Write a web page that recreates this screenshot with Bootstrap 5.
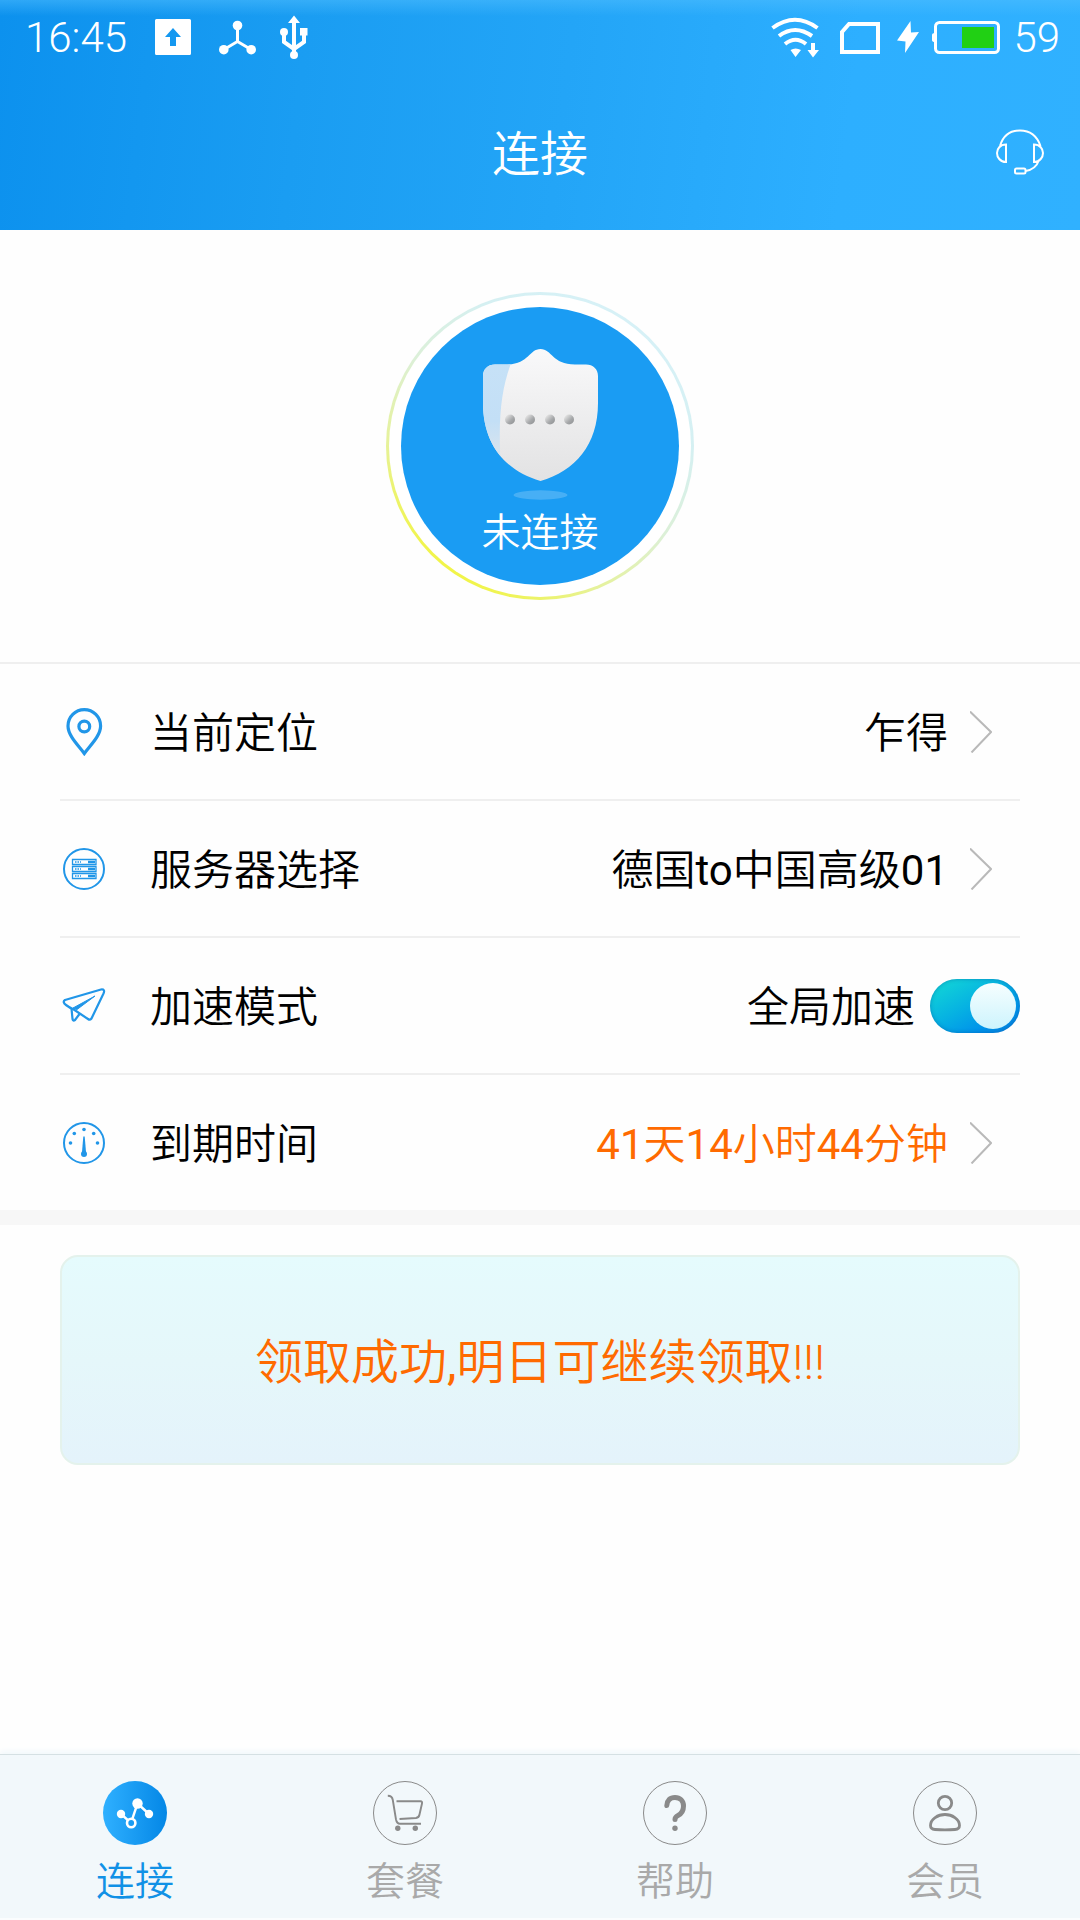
<!DOCTYPE html>
<html lang="zh-CN">
<head>
<meta charset="utf-8">
<meta name="viewport" content="width=device-width, initial-scale=1">
<title>连接</title>
<link href="https://cdn.jsdelivr.net/npm/bootstrap@5.3.0/dist/css/bootstrap.min.css" rel="stylesheet">
<style>
  body { font-family: Roboto, "Noto Sans CJK SC", sans-serif; font-weight: 350; color: #000; background: #fefefe; }
  svg { display: block; flex: none; }
  .app-header {
    color: #fff;
    background: linear-gradient(180deg, rgba(80,190,255,.5), rgba(80,190,255,0) 16px),
                linear-gradient(97deg, #0c91ee 0%, #1a9df2 28%, #23a5f7 52%, #2dafff 78%, #30b1ff 100%);
  }
  .status-bar { height: 74px; font-size: 42px; line-height: 74px; padding: 0 20px 0 25px; }
  .status-bar span { padding-top: 2px; }
  .status-left { gap: 24px; }
  .status-right { gap: 13px; }
  .title-bar { height: 156px; padding: 0 36px; display: grid; grid-template-columns: 1fr auto 1fr; }
  .title-bar h1 { font-size: 48px; line-height: 72px; font-weight: 350; padding-top: 5px; }
  .connect-area { padding: 62px 0; border-bottom: 2px solid #efefef; }
  .connect-ring {
    width: 308px; height: 308px; padding: 12px; border: 3px solid transparent; font-weight: 350;
    background: linear-gradient(#fff, #fff) padding-box,
                linear-gradient(35deg, #f3f53c 12%, #e6f29a 30%, #dcf0d8 50%, #d5f0f2 70%, #d8f2fb 100%) border-box;
  }
  .connect-disc { width: 100%; height: 100%; padding-top: 42px; background: #1a9cf3; color: #fff; font-size: 39px; line-height: 60px; }
  .connect-disc span { padding-top: 3px; }
  .setting-list { padding: 0 60px; border-bottom: 15px solid #f7f7f7; }
  .setting-row { height: 137px; border-bottom: 2px solid #efefef; font-size: 42px; line-height: 60px; color: #000; text-decoration: none; }
  .setting-row:last-child { height: 135px; border-bottom: 0; }
  .setting-row > span, .setting-row > label { padding-top: 5px; }
  .setting-icon { margin: 0 44px 0 2px; color: #2196e8; }
  .setting-arrow { margin: 0 28px 0 22px; color: #b9b9b9; }
  .orange-text { color: #ff6a00; }
  .accel-switch.form-check-input {
    width: 90px; height: 54px; margin: 0 0 0 15px; padding: 4px; border: 0; border-radius: 27px; flex: none;
    display: flex; justify-content: flex-start; align-items: center;
    background: #ccc; box-shadow: inset 0 0 4px rgba(0,70,150,.45);
  }
  .accel-switch.form-check-input:checked { justify-content: flex-end; background: linear-gradient(150deg, #10d0d8 12%, #06b2e2 45%, #0093ea 75%, #0a7fdc 100%); }
  .accel-switch::before { content: ""; width: 46px; height: 46px; border-radius: 50%; background: linear-gradient(#f6feff, #cdf4fd); }
  .claim-btn {
    width: 100%; height: 210px; padding: 5px 0 0; border: 2px solid #e4f2ec; border-radius: 18px; font-size: 48px; font-weight: 350;
    background: linear-gradient(#e5fbfd, #e5f7fa 50%, #e4f3fb);
  }
  .claim-area { padding: 30px 60px; }
  .tab-bar { border-top: 1px solid #d5e0e3; border-bottom: 2px solid #fbfdfe; background: #f2f8fb; box-shadow: 0 -3px 5px #f2f8fb; padding: 25px 0 8px; }
  .tab-link { gap: 8px; font-size: 39px; line-height: 56px; color: #a9a9a9; text-decoration: none; }
  .tab-link.current { color: #1191e6; }
  .tab-link svg { color: #8a8a8a; }
</style>
</head>
<body class="d-flex flex-column min-vh-100">

<header class="app-header">
  <div class="status-bar d-flex justify-content-between align-items-center">
    <div class="status-left d-flex align-items-center">
      <span class="me-1">16:45</span>
      <svg class="me-1" width="36" height="44" viewBox="0 0 36 44"><path fill="#fff" fill-rule="evenodd" d="M1.500 4H34.500Q36 4 36 5.500V38.500Q36 40 34.500 40H1.500Q0 40 0 38.500V5.500Q0 4 1.500 4ZM18 13L10 22H15V31H21V22H26Z"/></svg>
      <svg width="37" height="44" viewBox="0 0 37 44" fill="#fff"><path d="M18.500 10V26.500L5 34.500M18.500 26.500L32 34.500" fill="none" stroke="#fff" stroke-width="3"/><circle cx="18.500" cy="10.500" r="4.800"/><circle cx="4.800" cy="34.700" r="4.800"/><circle cx="32.200" cy="34.700" r="4.800"/></svg>
      <svg width="28" height="44" viewBox="0 0 28 44" fill="#fff"><path d="M14 6V40M4 17V27L14 34L24 27V17" fill="none" stroke="#fff" stroke-width="4"/><path d="M14 .5L20 8H8ZM20 13H27.500V20.500H20Z"/><circle cx="4" cy="17" r="4"/><circle cx="14" cy="40" r="4"/></svg>
    </div>
    <div class="status-right d-flex align-items-center">
      <svg class="me-2" width="48" height="44" viewBox="0 0 48 44" fill="#fff"><g fill="none" stroke="#fff" stroke-width="4"><path d="M1.500 13Q24 -3.500 46.500 13"/><path d="M8 21Q24 9 41 21"/><path d="M14 29Q24.500 20.500 35 29"/></g><path d="M19.500 35Q24.500 32 30 35L24.500 42ZM40 28H44V35H48L42 42.500L36.500 35H40Z"/></svg>
      <svg class="me-1" width="40" height="44" viewBox="0 0 40 44"><path d="M2 17L9 9H38V37H2Z" fill="none" stroke="#fff" stroke-width="4"/></svg>
      <svg width="22" height="44" viewBox="0 0 22 44"><path d="M13.500 6L0 25.500L8.500 26.500L8 38L22 17L14 17.500Z" fill="#fff"/></svg>
      <svg width="68" height="44" viewBox="0 0 68 44"><rect x="3.500" y="7.500" width="63" height="30" rx="4" fill="none" stroke="#fff" stroke-width="3"/><path d="M3 18Q0 18 0 20V25Q0 27 3 27Z" fill="#fff"/><rect x="30" y="12" width="32" height="21" fill="#21d014"/></svg>
      <span>59</span>
    </div>
  </div>
  <div class="title-bar align-items-center">
    <span></span>
    <h1 class="m-0">连接</h1>
    <a href="#" class="ms-auto text-white" aria-label="客服">
      <svg width="48" height="46" viewBox="0 0 48 46" fill="none" stroke="#fff" stroke-width="2"><path d="M4 17C7 7 14 1.500 24 1.500S41 7 44.500 17M10 15.500V33C4 33 1 28 1 24S4 15.500 10 15.500ZM38 15.500V33C44 33 47 28 47 24S44 15.500 38 15.500ZM43 31C41 37 36 41 29.500 42"/><rect x="19" y="39.500" width="10.500" height="5" rx="1.500"/></svg>
    </a>
  </div>
</header>

<main class="flex-grow-1">
  <section class="connect-area d-flex justify-content-center">
    <button type="button" class="connect-ring rounded-circle">
      <span class="connect-disc rounded-circle d-flex flex-column align-items-center">
        <svg width="115" height="151" viewBox="0 0 115 151">
          <defs>
            <linearGradient id="shieldFill" x1="0" y1="0" x2="0" y2="1"><stop offset="0" stop-color="#f9f9fa"/><stop offset="1" stop-color="#e2e2e3"/></linearGradient>
            <linearGradient id="shieldSide" x1="0" y1="0" x2="0" y2="1"><stop offset="0" stop-color="#c7e2f7"/><stop offset=".6" stop-color="#c3dff6"/><stop offset="1" stop-color="#e2e6ea"/></linearGradient>
            <linearGradient id="dotFill" x1="0" y1="0" x2="1" y2="1"><stop offset=".15" stop-color="#e2e2e2"/><stop offset=".6" stop-color="#a5a7a9"/><stop offset="1" stop-color="#8d8f91"/></linearGradient>
            <clipPath id="shieldClip"><path d="M57.500 0C69 0 69 15.500 92 15.500H103C110 15.500 115 20 115 27V54C115 96 92 122 57.500 132C23 122 0 96 0 54V27C0 20 5 15.500 12 15.500H23C46 15.500 46 0 57.500 0Z"/></clipPath>
          </defs>
          <g clip-path="url(#shieldClip)"><rect width="115" height="133" fill="url(#shieldFill)"/><path d="M0 0H34C20 30 14 60 18 120H0Z" fill="url(#shieldSide)"/></g>
          <g fill="url(#dotFill)"><circle cx="27" cy="70.500" r="5"/><circle cx="47" cy="70.500" r="5"/><circle cx="67" cy="70.500" r="5"/><circle cx="86" cy="70.500" r="5"/></g>
          <ellipse cx="57.500" cy="146" rx="27" ry="4.700" fill="#fff" opacity=".2"/>
        </svg>
        <span>未连接</span>
      </span>
    </button>
  </section>

  <div class="setting-list">
    <a href="#" class="setting-row d-flex align-items-center">
      <svg class="setting-icon" width="44" height="48" viewBox="0 0 44 48" fill="none" stroke="currentColor" stroke-width="3.200"><path d="M22.300 45.500C17 38 6 28 6 18A16.300 16.300 0 0 1 38.600 18C38.600 28 27.600 38 22.300 45.500Z"/><circle cx="22.300" cy="18.500" r="5.400"/></svg>
      <span>当前定位</span><span class="ms-auto">乍得</span>
      <svg class="setting-arrow" width="22" height="42" viewBox="0 0 22 42" fill="none" stroke="currentColor" stroke-width="2"><path d="M0 .5L21 21L1.500 41.500"/></svg>
    </a>
    <a href="#" class="setting-row d-flex align-items-center">
      <svg class="setting-icon" width="44" height="48" viewBox="0 0 44 48" fill="none" stroke="currentColor"><circle cx="22" cy="24" r="20" stroke-width="2"/><path d="M10.500 14.500H34V19.500H10.500ZM10.500 21.500H34V26.500H10.500ZM10.500 28.500H34V33.500H10.500Z" stroke-width="1.300"/><path d="M26 17H33M26 24H33M26 31H33" stroke-width="2.600"/><path d="M13 17H19M13 24H19M13 31H19" stroke-width="1.500" stroke-dasharray="1.500 1"/></svg>
      <span>服务器选择</span><span class="ms-auto">德国<span class="fw-normal">to</span>中国高级<span class="fw-normal">01</span></span>
      <svg class="setting-arrow" width="22" height="42" viewBox="0 0 22 42" fill="none" stroke="currentColor" stroke-width="2"><path d="M0 .5L21 21L1.500 41.500"/></svg>
    </a>
    <div class="setting-row d-flex align-items-center">
      <svg class="setting-icon" width="44" height="48" viewBox="0 0 44 48" fill="none" stroke="currentColor" stroke-width="2.200" stroke-linejoin="round"><path d="M3 18L39 7.500Q43.500 7 41.500 11.500L29.500 36.500Q28 38.500 26 37L11 27Q8 26 4 23Q0 20 3 18Z"/><path d="M9.500 26.500L10.500 37Q11 39.500 13 38L17.500 32"/><path d="M11 26L33 14L15 27.500Z" fill="currentColor" stroke-width="1"/></svg>
      <label for="accel">加速模式</label><label for="accel" class="ms-auto">全局加速</label>
      <input class="form-check-input accel-switch" type="checkbox" role="switch" id="accel" checked>
    </div>
    <a href="#" class="setting-row d-flex align-items-center">
      <svg class="setting-icon" width="44" height="48" viewBox="0 0 44 48" fill="currentColor"><circle cx="22" cy="24" r="20" fill="none" stroke="currentColor" stroke-width="2"/><circle cx="22" cy="10.500" r="1.800"/><circle cx="12.300" cy="14.500" r="1.800"/><circle cx="31.700" cy="14.500" r="1.800"/><circle cx="8.500" cy="24" r="1.800"/><circle cx="35.500" cy="24" r="1.800"/><path d="M21.300 17.500H22.700L24 33H20Z"/><circle cx="22" cy="35" r="3"/></svg>
      <span>到期时间</span><span class="ms-auto orange-text"><span class="fw-normal">41</span>天<span class="fw-normal">14</span>小时<span class="fw-normal">44</span>分钟</span>
      <svg class="setting-arrow" width="22" height="42" viewBox="0 0 22 42" fill="none" stroke="currentColor" stroke-width="2"><path d="M0 .5L21 21L1.500 41.500"/></svg>
    </a>
  </div>

  <div class="claim-area">
    <button type="button" class="claim-btn orange-text">领取成功<span class="fw-normal">,</span>明日可继续领取!!!</button>
  </div>
</main>

<nav class="tab-bar">
  <div class="row g-0">
    <a href="#" class="col tab-link current d-flex flex-column align-items-center" aria-current="page">
      <svg width="66" height="66" viewBox="0 0 66 66"><defs><linearGradient id="tabFill"><stop offset="0" stop-color="#2fb0ff"/><stop offset="1" stop-color="#0487e6"/></linearGradient></defs><circle cx="33" cy="33" r="32" fill="url(#tabFill)"/><path d="M19 34L29 43L35.500 23.500L47 34" fill="none" stroke="#fff" stroke-width="2.400"/><g fill="#fff"><circle cx="19" cy="34" r="4.200"/><circle cx="35.500" cy="23.500" r="5.200"/><circle cx="47" cy="34" r="4.200"/></g><circle cx="29.200" cy="43" r="4.200" fill="#1a9cf3" stroke="#fff" stroke-width="2.600"/></svg>
      <span>连接</span>
    </a>
    <a href="#" class="col tab-link d-flex flex-column align-items-center">
      <svg width="66" height="66" viewBox="0 0 66 66" fill="none" stroke="currentColor"><circle cx="33" cy="33" r="31.500"/><path d="M15.800 15.800C19 15.800 20.300 17 20.800 20L24 39.500Q24.800 43.700 28 43.700H49M24.500 21.300H48.500Q50.500 21.300 50 23.500L47.500 34.500Q47 37.500 44 38L27.500 39" stroke-width="1.900"/><circle cx="25.800" cy="48.300" r="2.700" fill="currentColor" stroke="none"/><circle cx="43.300" cy="48.300" r="2.700" fill="currentColor" stroke="none"/></svg>
      <span>套餐</span>
    </a>
    <a href="#" class="col tab-link d-flex flex-column align-items-center">
      <svg width="66" height="66" viewBox="0 0 66 66" fill="none" stroke="currentColor"><circle cx="33" cy="33" r="31.500"/><path d="M24.800 25.500C25 20.500 28 17.500 33 17.500C38 17.500 41.500 21 41.500 26C41.500 31 39 34 36 35.500Q33 37 33 39.500" stroke-width="5" stroke-linecap="round"/><circle cx="33" cy="48.300" r="2.700" fill="currentColor" stroke="none"/></svg>
      <span>帮助</span>
    </a>
    <a href="#" class="col tab-link d-flex flex-column align-items-center">
      <svg width="66" height="66" viewBox="0 0 66 66" fill="none" stroke="currentColor"><circle cx="33" cy="33" r="31.500"/><g stroke-width="2.800"><circle cx="33" cy="23" r="6.700"/><path d="M33 34.500C40 34.500 47.500 39 47.500 45.500C47.500 48.500 46 49.300 43 49.500Q33 50.200 23 49.500C20 49.300 18.500 48.500 18.500 45.500C18.500 39 26 34.500 33 34.500Z"/></g></svg>
      <span>会员</span>
    </a>
  </div>
</nav>

<script src="https://cdn.jsdelivr.net/npm/bootstrap@5.3.0/dist/js/bootstrap.bundle.min.js"></script>
</body>
</html>
